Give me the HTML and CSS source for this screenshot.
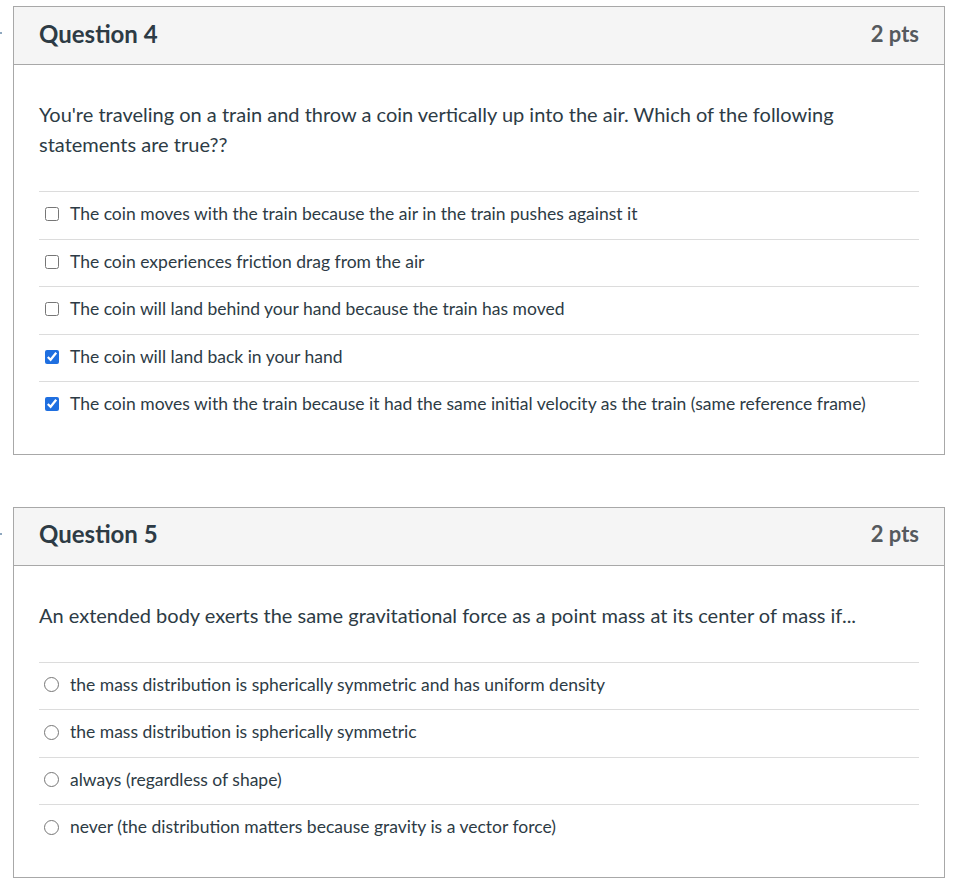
FILE: index.html
```html
<!DOCTYPE html>
<html>
<head>
<meta charset="utf-8">
<link rel="stylesheet" href="styles.css">
</head>
<body>
<div class="quiz">
  <section class="question">
    <span class="flag"></span>
    <header class="q-header">
      <h2 class="q-title">Question 4</h2>
      <span class="q-pts">2 pts</span>
    </header>
    <div class="q-body">
      <p class="q-text">You're traveling on a train and throw a coin vertically up into the air. Which of the following statements are true??</p>
      <ul class="answers">
        <li class="answer"><input class="check" type="checkbox"><span>The coin moves with the train because the air in the train pushes against it</span></li>
        <li class="answer"><input class="check" type="checkbox"><span>The coin experiences friction drag from the air</span></li>
        <li class="answer"><input class="check" type="checkbox"><span>The coin will land behind your hand because the train has moved</span></li>
        <li class="answer"><input class="check" type="checkbox" checked><span>The coin will land back in your hand</span></li>
        <li class="answer"><input class="check" type="checkbox" checked><span>The coin moves with the train because it had the same initial velocity as the train (same reference frame)</span></li>
      </ul>
    </div>
  </section>
  <section class="question">
    <span class="flag"></span>
    <header class="q-header">
      <h2 class="q-title">Question 5</h2>
      <span class="q-pts">2 pts</span>
    </header>
    <div class="q-body">
      <p class="q-text">An extended body exerts the same gravitational force as a point mass at its center of mass if...</p>
      <ul class="answers">
        <li class="answer"><input class="radio" type="radio" name="q5"><span>the mass distribution is spherically symmetric and has uniform density</span></li>
        <li class="answer"><input class="radio" type="radio" name="q5"><span>the mass distribution is spherically symmetric</span></li>
        <li class="answer"><input class="radio" type="radio" name="q5"><span>always (regardless of shape)</span></li>
        <li class="answer"><input class="radio" type="radio" name="q5"><span>never (the distribution matters because gravity is a vector force)</span></li>
      </ul>
    </div>
  </section>
</div>
</body>
</html>
```
FILE: styles.css
```css
html, body {
  margin: 0;
  padding: 0;
  background: #ffffff;
}
body {
  font-family: Lato, "Open Sans", "Liberation Sans", sans-serif;
  color: #2d3b45;
}
.quiz {
  padding: 6px 28px 0 13px;
  display: flex;
  flex-direction: column;
  gap: 52px;
}
.question {
  position: relative;
  border: 1px solid #a8a8a8;
  background: #fff;
}
.flag {
  position: absolute;
  left: -14px;
  top: 25px;
  width: 2px;
  height: 2px;
  background: #8fa8bf;
}
.q-header {
  height: 58px;
  box-sizing: border-box;
  background: #f5f5f5;
  border-bottom: 1px solid #a8a8a8;
  display: flex;
  align-items: center;
  justify-content: space-between;
  padding: 0 25px 5px;
}
.q-title {
  margin: 0;
  font-size: 24px;
  font-weight: 700;
  color: #2d3b45;
}
.q-pts {
  font-size: 22px;
  font-weight: 700;
  color: #555a5e;
}
.q-body {
  padding: 34px 25px 25px;
}
.q-text {
  margin: 0 0 32px;
  font-size: 20px;
  line-height: 30px;
}
.answers {
  list-style: none;
  margin: 0;
  padding: 0;
}
.answer {
  display: flex;
  align-items: center;
  border-top: 1px solid #dcdcdc;
  padding: 12px 0 14px;
  line-height: 20.5px;
  font-size: 17.5px;
}
.answer input {
  flex: none;
  accent-color: #1f6fe0;
}
.check {
  width: 14px;
  height: 14px;
  margin: 0 11px 0 6px;
}
.radio {
  width: 15px;
  height: 15px;
  margin: 0 11px 0 5px;
}
```
